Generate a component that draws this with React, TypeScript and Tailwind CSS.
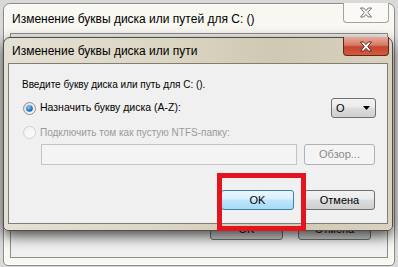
import React from "react";

function Radio({ checked, disabled }: { checked?: boolean; disabled?: boolean }) {
  return (
    <svg width="13" height="13" viewBox="0 0 13 13" className="shrink-0">
      <defs>
        <linearGradient id={disabled ? "rgd" : "rg"} x1="0" y1="0" x2="1" y2="1">
          <stop offset="0" stopColor={disabled ? "#f2f2f2" : "#d8d8d8"} />
          <stop offset="1" stopColor={disabled ? "#fbfbfb" : "#ffffff"} />
        </linearGradient>
        <radialGradient id="dot" cx="0.4" cy="0.35" r="0.7">
          <stop offset="0" stopColor="#8fd0f5" />
          <stop offset="0.6" stopColor="#2a7fc8" />
          <stop offset="1" stopColor="#174f8a" />
        </radialGradient>
      </defs>
      <circle
        cx="6.5"
        cy="6.5"
        r="6"
        fill={`url(#${disabled ? "rgd" : "rg"})`}
        stroke={disabled ? "#cfcfcf" : "#8e8f8f"}
      />
      {checked && <circle cx="6.5" cy="6.5" r="3.3" fill="url(#dot)" />}
    </svg>
  );
}

function CloseGlyph({ fill, stroke }: { fill: string; stroke: string }) {
  return (
    <svg width="14" height="11" viewBox="0 0 14 11">
      <path
        d="M1.5 1h3.2L7 3.6 9.3 1h3.2L8.8 5.5l3.7 4.5H9.3L7 7.4 4.7 10H1.5l3.7-4.5z"
        fill={fill}
        stroke={stroke}
        strokeWidth="1"
        strokeLinejoin="round"
      />
    </svg>
  );
}

function WinButton({
  children,
  active,
  disabled,
  className,
}: {
  children: React.ReactNode;
  active?: boolean;
  disabled?: boolean;
  className?: string;
}) {
  const look = disabled
    ? "border-[#adb2b5] bg-[#f4f4f4] text-[#8a8a8a]"
    : active
      ? "border-[#3c7fb1] bg-[linear-gradient(#eaf6fd_0%,#d9f0fc_45%,#bee6fd_50%,#a7d9f5_100%)] text-black"
      : "border-[#707070] bg-[linear-gradient(#f2f2f2_0%,#ebebeb_45%,#dddddd_50%,#cfcfcf_100%)] text-black";
  return (
    <div
      className={`flex items-center justify-center rounded-[3px] border text-[11px] ${look} ${className ?? ""}`}
    >
      {children}
    </div>
  );
}

export default function App() {
  return (
    <div className="relative h-[267px] w-[398px] overflow-hidden bg-[#d9d9d9] font-['Liberation_Sans',Arial,sans-serif]">
      {/* back window */}
      <div className="absolute left-[3px] top-[3px] flex h-[263px] w-[392px] flex-col rounded-t-[7px] rounded-b-[5px] border border-[#8b8a82] bg-[#f8f7f1] px-[6px] pb-[7px] shadow-[inset_0_0_0_1px_#ffffff]">
        <div className="relative flex h-[29px] items-center pl-[2px] text-[12px] text-black">
          Изменение буквы диска или путей для C: ()
          <div className="absolute right-[-1px] top-[-1px] flex h-[20px] w-[46px] items-center justify-center rounded-b-[4px] border border-t-0 border-[#a4a29b] bg-[#faf9f5]">
            <CloseGlyph fill="#f4f4f4" stroke="#77776f" />
          </div>
        </div>
        <div className="flex flex-1 items-end justify-end gap-[15px] border border-[#8f8d84] bg-[#f0f0f0] pb-[17px] pr-[16px]">
          <WinButton className="h-[21px] w-[73px]">OK</WinButton>
          <WinButton className="h-[21px] w-[73px]">Отмена</WinButton>
        </div>
      </div>

      {/* front dialog */}
      <div className="absolute left-[3px] top-[37px] flex h-[194px] w-[390px] flex-col rounded-t-[7px] rounded-b-[5px] border border-[#4e4d46] bg-[linear-gradient(90deg,#e4e0d3_0%,#dcd6c4_40%,#cfc8b2_70%,#d8d2bf_100%)] px-[4px] pb-[6px] shadow-[0_5px_14px_rgba(0,0,0,0.7)]">
        <div className="relative flex h-[25px] items-center pl-[4px] text-[12px] text-black">
          Изменение буквы диска или пути
          <div className="absolute right-[-1px] top-[-1px] flex h-[19px] w-[46px] items-center justify-center rounded-b-[4px] border border-t-0 border-[#5a2a20] bg-[linear-gradient(#e9a99a_0%,#d77a66_45%,#c4452d_55%,#d8593c_100%)]">
            <CloseGlyph fill="#ffffff" stroke="#5b2b22" />
          </div>
        </div>
        <div className="flex flex-1 flex-col border border-[#7f7d74] bg-[#f0f0f0] pl-[13px] pr-[11px] pt-[14px] text-[10px] text-black">
          <p className="h-[14px] leading-[14px]">Введите букву диска или путь для C: ().</p>
          <div className="mt-[6px] flex h-[20px] items-center">
            <div className="ml-[1px] flex items-center gap-[4px] text-[10.5px]">
              <Radio checked />
              <span>Назначить букву диска (A-Z):</span>
            </div>
            <div className="ml-auto flex h-[20px] w-[45px] items-center justify-between rounded-[3px] border border-[#707070] bg-[linear-gradient(#f2f2f2_0%,#ebebeb_45%,#dddddd_50%,#cfcfcf_100%)] pl-[4px] pr-[5px] text-[11px]">
              <span>O</span>
              <svg width="7" height="4" viewBox="0 0 7 4">
                <path d="M0 0h7L3.5 4z" fill="#000" />
              </svg>
            </div>
          </div>
          <div className="mt-[7px] flex h-[14px] items-center gap-[4px] pl-[1px] text-[#9a9a9a]">
            <Radio disabled />
            <span>Подключить том как пустую NTFS-папку:</span>
          </div>
          <div className="mt-[5px] flex h-[21px] items-center">
            <div className="ml-[19px] h-[21px] w-[256px] border border-[#c2c4c6] bg-[#f4f4f4]" />
            <WinButton disabled className="ml-auto mr-[1px] h-[21px] w-[71px]">
              Обзор...
            </WinButton>
          </div>
          <div className="mt-[25px] flex items-center justify-end gap-[10px] pr-[1px]">
            <WinButton active className="h-[20px] w-[73px]">
              OK
            </WinButton>
            <WinButton className="h-[20px] w-[71px]">Отмена</WinButton>
          </div>
        </div>
      </div>

      {/* highlight box */}
      <div className="absolute left-[217px] top-[173px] h-[58px] w-[89px] border-[5px] border-[#e4141f]" />
    </div>
  );
}
